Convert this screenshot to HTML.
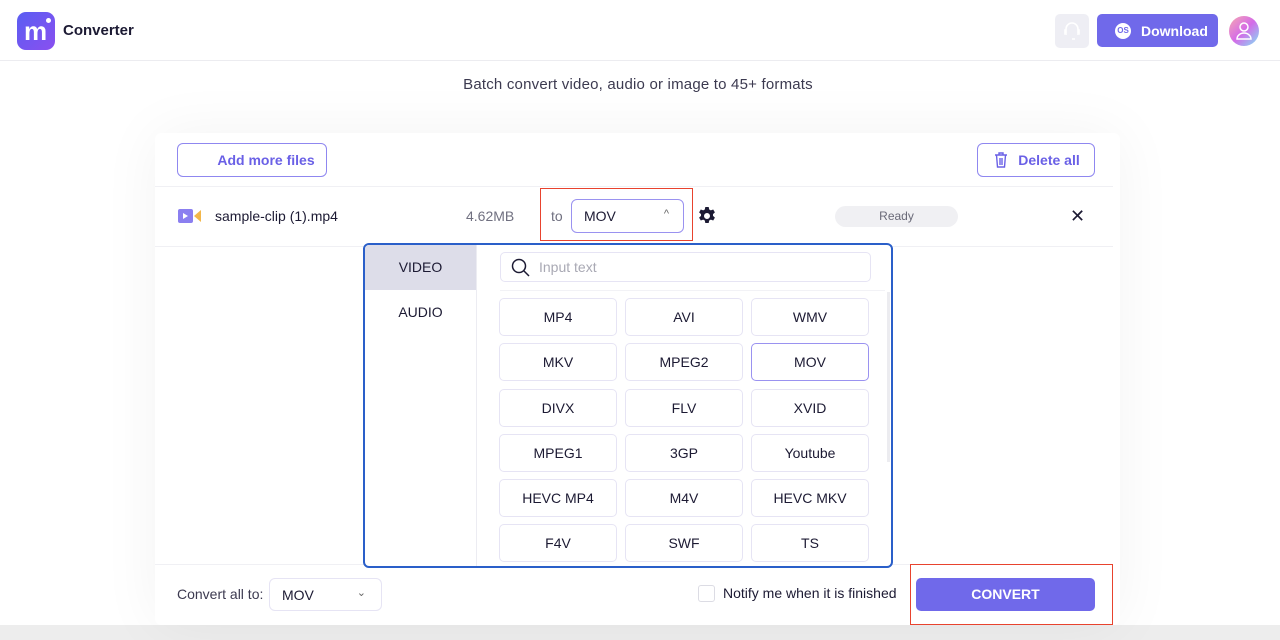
<!DOCTYPE html>
<html><head><meta charset="utf-8"><style>
*{box-sizing:border-box;margin:0;padding:0}
body{width:1280px;height:640px;overflow:hidden;background:#fff;font-family:"Liberation Sans",sans-serif;color:#1c1a33;position:relative}
.abs{position:absolute}
.hdr{left:0;top:0;width:1280px;height:61px;border-bottom:1px solid #ececf0;background:#fff}
.card{left:155px;top:133px;width:965px;height:492px;background:#fff;border-radius:6px;box-shadow:0 0 60px rgba(0,0,0,0.05)}
.btn-o{border:1.5px solid #8f87f0;border-radius:6px;color:#6a60e6;font-weight:bold;font-size:14px;display:flex;align-items:center;justify-content:center}
.fb{position:absolute;width:118px;height:38px;border:1.5px solid #e6e4f4;border-radius:5px;display:flex;align-items:center;justify-content:center;font-size:14px;color:#1c1a33;background:#fff}
</style></head><body>
<div class="abs" style="left:0;top:625px;width:1280px;height:15px;background:#ededed"></div>
<div class="abs hdr"></div>
<div class="abs" style="left:17px;top:12px;width:38px;height:38px;border-radius:9px;background:linear-gradient(135deg,#5a5ef2,#8a4ff0)"></div>
<div class="abs" style="left:24px;top:19px;color:#fff;font-weight:bold;font-size:26px;line-height:24px">m</div>
<div class="abs" style="left:46px;top:18px;width:5px;height:5px;border-radius:50%;background:#fff"></div>
<div class="abs" style="left:63px;top:22px;font-weight:bold;font-size:15px;line-height:17px;color:#1c1a33">Converter</div>
<div class="abs" style="left:1055px;top:14px;width:34px;height:34px;border-radius:5px;background:#eeeef4">
<svg width="34" height="34"><path d="M11 19v-4a6 6 0 0 1 12 0v4M11 16h-1v4h2M23 16h1v4h-2M17 25h3" stroke="#fff" stroke-width="1.6" fill="none"/></svg></div>
<div class="abs" style="left:1097px;top:14px;width:121px;height:33px;border-radius:5px;background:#7069ea;color:#fff;font-weight:bold;font-size:14px;display:flex;align-items:center;padding-left:18px">
<span style="width:16px;height:16px;border-radius:50%;background:#fff;color:#7069ea;font-size:8px;display:inline-flex;align-items:center;justify-content:center;margin-right:10px">OS</span>Download</div>
<div class="abs" style="left:1229px;top:16px;width:30px;height:30px;border-radius:50%;background:linear-gradient(135deg,#f7a8b0,#d46be8 50%,#7fe3f5)"><svg width="30" height="30"><circle cx="15" cy="11" r="4" stroke="#fff" stroke-width="1.5" fill="none"/><path d="M8 23a7 6 0 0 1 14 0z" stroke="#fff" stroke-width="1.5" fill="none"/></svg></div>
<div class="abs" style="left:0;top:76px;width:1276px;text-align:center;font-size:15px;color:#3c3a50;letter-spacing:0.2px">Batch convert video, audio or image to 45+ formats</div>
<div class="abs card"></div>
<div class="abs btn-o" style="left:177px;top:143px;width:150px;height:34px;padding-left:28px">Add more files</div>
<div class="abs btn-o" style="left:977px;top:143px;width:118px;height:34px;"><svg width="18" height="18" style="margin-right:8px"><path d="M3 4h12M7 4V2h4v2M4.5 4l1 12h7l1-12M8 7v7M10 7v7" stroke="#6a60e6" stroke-width="1.4" fill="none"/></svg>Delete all</div>
<div class="abs" style="left:155px;top:186px;width:958px;height:1px;background:#f0f0f4"></div>
<div class="abs" style="left:155px;top:246px;width:958px;height:1px;background:#f0f0f4"></div>
<div class="abs" style="left:178px;top:209px;width:15px;height:14px;background:#8b7ff0;border-radius:2px"></div>
<div class="abs" style="left:183px;top:213px;width:0;height:0;border-left:5px solid #fff;border-top:3px solid transparent;border-bottom:3px solid transparent"></div>
<div class="abs" style="left:194px;top:210px;width:0;height:0;border-right:7px solid #f3b74a;border-top:6px solid transparent;border-bottom:6px solid transparent"></div>
<div class="abs" style="left:215px;top:208px;font-size:14px">sample-clip (1).mp4</div>
<div class="abs" style="left:466px;top:208px;font-size:14px;color:#707080">4.62MB</div>
<div class="abs" style="left:540px;top:188px;width:153px;height:53px;border:1.5px solid #e8432e"></div>
<div class="abs" style="left:551px;top:208px;font-size:14px;color:#707080">to</div>
<div class="abs" style="left:571px;top:199px;width:113px;height:34px;border:1.5px solid #9a92f0;border-radius:6px;font-size:14px;padding:8px 12px">MOV<span style="position:absolute;right:14px;top:8px;font-size:11px;color:#666">^</span></div>
<svg class="abs" style="left:697px;top:206px" width="20" height="20" viewBox="0 0 20 20"><path fill="#1c1a33" fill-rule="evenodd" d="M8.3 1h3.4l.5 2.5 1.6.9 2.4-.9 1.7 2.9-1.9 1.7v1.8l1.9 1.7-1.7 2.9-2.4-.9-1.6.9-.5 2.5H8.3l-.5-2.5-1.6-.9-2.4.9-1.7-2.9 1.9-1.7V8.1L2.1 6.4l1.7-2.9 2.4.9 1.6-.9zM10 7a3 3 0 1 0 0 6 3 3 0 0 0 0-6z"/></svg>
<div class="abs" style="left:835px;top:206px;width:123px;height:21px;border-radius:11px;background:#f0f0f3;font-size:12px;color:#6a6a78;text-align:center;line-height:21px">Ready</div>
<div class="abs" style="left:1070px;top:206px;font-size:18px;color:#1c1a33">✕</div>
<div class="abs" style="left:155px;top:564px;width:958px;height:1px;background:#f0f0f4"></div>
<div class="abs" style="left:363px;top:243px;width:530px;height:325px;border:2px solid #2a5fc9;border-radius:6px;background:#fff;overflow:hidden">
<div class="abs" style="left:0;top:0;width:111px;height:45px;background:#dddde9;font-size:14px;text-align:center;line-height:45px">VIDEO</div>
<div class="abs" style="left:0;top:45px;width:111px;height:45px;font-size:14px;text-align:center;line-height:45px">AUDIO</div>
<div class="abs" style="left:111px;top:0;width:1px;height:325px;background:#ececf2"></div>
<div class="abs" style="left:135px;top:7px;width:371px;height:30px;border:1px solid #e6e4f4;border-radius:5px;font-size:14px;color:#a9a9b4;padding:6px 0 0 38px">Input text
<svg class="abs" style="left:10px;top:5px" width="20" height="20"><circle cx="8" cy="8" r="6.5" stroke="#1c1a33" stroke-width="1.5" fill="none"/><path d="M13 13l5 5" stroke="#1c1a33" stroke-width="1.5"/></svg></div>
<div class="abs" style="left:135px;top:45px;width:385px;height:1px;background:#f2f2f6"></div>
<div class="abs" style="left:522px;top:47px;width:3px;height:170px;background:#ececf0"></div>
</div>
<div class="abs" style="left:0;top:0">
<div class="fb" style="left:499px;top:298px">MP4</div><div class="fb" style="left:625px;top:298px">AVI</div><div class="fb" style="left:751px;top:298px">WMV</div>
<div class="fb" style="left:499px;top:343px">MKV</div><div class="fb" style="left:625px;top:343px">MPEG2</div><div class="fb" style="left:751px;top:343px;border-color:#9a92f0">MOV</div>
<div class="fb" style="left:499px;top:389px">DIVX</div><div class="fb" style="left:625px;top:389px">FLV</div><div class="fb" style="left:751px;top:389px">XVID</div>
<div class="fb" style="left:499px;top:434px">MPEG1</div><div class="fb" style="left:625px;top:434px">3GP</div><div class="fb" style="left:751px;top:434px">Youtube</div>
<div class="fb" style="left:499px;top:479px">HEVC MP4</div><div class="fb" style="left:625px;top:479px">M4V</div><div class="fb" style="left:751px;top:479px">HEVC MKV</div>
<div style="position:absolute;left:495px;top:524px;width:380px;height:38px;overflow:hidden">
<div class="fb" style="left:4px;top:0">F4V</div><div class="fb" style="left:130px;top:0">SWF</div><div class="fb" style="left:256px;top:0">TS</div></div>
</div>
<div class="abs" style="left:177px;top:586px;font-size:14px;color:#3c3a50">Convert all to:</div>
<div class="abs" style="left:269px;top:578px;width:113px;height:33px;border:1px solid #e6e4f4;border-radius:6px;font-size:14px;padding:8px 12px">MOV<span style="position:absolute;right:15px;top:7px;font-size:11px;color:#666">⌄</span></div>
<div class="abs" style="left:698px;top:585px;width:17px;height:17px;border:1px solid #dcdce4;border-radius:3px"></div>
<div class="abs" style="left:723px;top:585px;font-size:14px;color:#1c1a33">Notify me when it is finished</div>
<div class="abs" style="left:910px;top:564px;width:203px;height:61px;border:1.5px solid #e8432e"></div>
<div class="abs" style="left:916px;top:578px;width:179px;height:33px;border-radius:5px;background:#7069ea;color:#fff;font-weight:bold;font-size:14px;text-align:center;line-height:33px">CONVERT</div>
</body></html>
